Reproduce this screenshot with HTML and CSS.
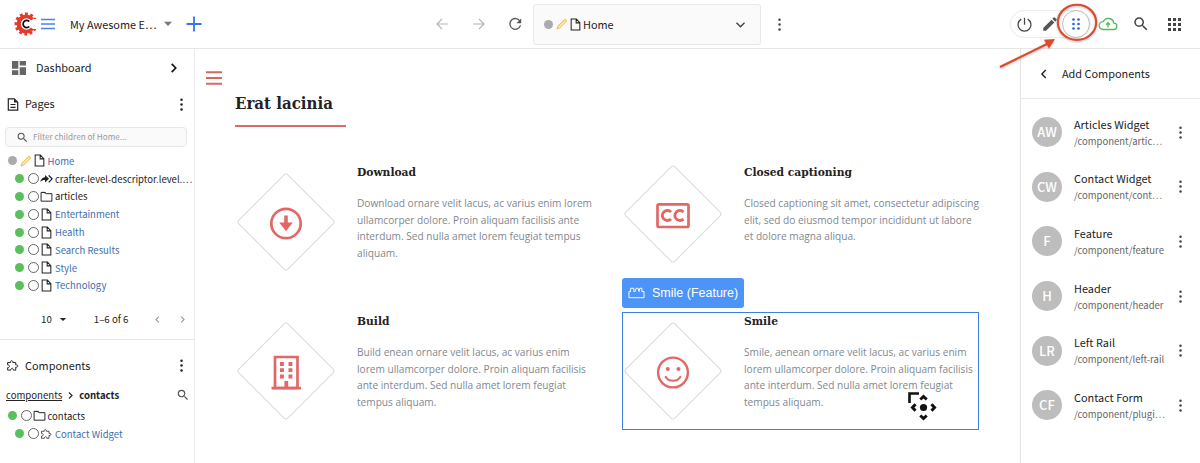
FILE: index.html
```html
<!DOCTYPE html>
<html lang="en">
<head>
<meta charset="utf-8">
<title>Home</title>
<link rel="stylesheet" href="styles.css">
</head>
<body>
<svg class="defs" width="0" height="0">
  <symbol id="dots" viewBox="0 0 24 24"><circle cx="12" cy="4.200" r="2"/><circle cx="12" cy="12" r="2"/><circle cx="12" cy="19.800" r="2"/></symbol>
  <symbol id="page" viewBox="0 0 12 12"><path d="M2 1h4.800L10 4.300V11H2zM6.600 1v3.500H10" fill="none" stroke="currentColor" stroke-width=".95"/></symbol>
  <symbol id="folder" viewBox="0 0 12 12"><path d="M1 2.200h3.600l1.100 1.200H11V10.300H1z" fill="none" stroke="currentColor" stroke-width=".9"/><path d="M1 1.900h3.800l1 1.400H5z"/></symbol>
  <symbol id="pencil" viewBox="0 0 12 12"><path d="M1 11l.7-2.700 7-7c.7-.6 2.500 1 1.800 1.900l-7 7z" fill="#f7d88a" stroke="#eebb45" stroke-width=".8"/><path d="M2.500 9.500l6-6" stroke="#fff" stroke-width=".6"/></symbol>
  <symbol id="search" viewBox="0 0 24 24"><path d="M15.500 14h-.79l-.28-.27A6.470 6.470 0 0 0 16 9.500 6.500 6.500 0 1 0 9.500 16c1.610 0 3.090-.59 4.230-1.570l.27.28v.79l5 4.990L20.490 19zm-6 0C7 14 5 12 5 9.500S7 5 9.500 5 14 7 14 9.500 12 14 9.500 14z"/></symbol>
  <symbol id="puzzle" viewBox="0 0 24 24"><path d="M3 6.500h5.500C7 2 13.500 2 12.500 6.500H18V11c5-1.500 5 5 0 4v5.500h-4.500c.5-4.500-5-4.500-4.500 0H3V16c4.500.5 4.500-5.500 0-5z" fill="none" stroke="currentColor" stroke-width="1.800"/></symbol>
  <symbol id="left" viewBox="0 0 12 12"><path d="M7.500 2.800L4.300 6l3.200 3.200" fill="none" stroke="currentColor" stroke-width="1.200"/></symbol>
  <symbol id="right" viewBox="0 0 12 12"><path d="M4.500 2.800L7.700 6 4.500 9.200" fill="none" stroke="currentColor" stroke-width="1.200"/></symbol>
</svg>

<header class="topbar">
  <div class="brand">
    <svg class="logo" viewBox="0 0 24 26"><circle cx="12" cy="13" r="10" fill="none" stroke="#e23b2e" stroke-width="3" stroke-dasharray="2.900 2.336" stroke-dashoffset="1.300"/><circle cx="12" cy="13" r="9.500" fill="#e23b2e"/><circle cx="12.500" cy="13" r="5.700" fill="#fff"/><path d="M15.500 10.500L19 8h6v10h-6l-3.500-2.500z" fill="#fff"/><path d="M15.300 10.500a3.600 3.600 0 1 0 0 5" fill="none" stroke="#111" stroke-width="1.700"/></svg>
    <svg class="menu" viewBox="0 0 14 12"><path d="M0 1.500h14M0 6h14M0 10.500h14" stroke="#4b7fe5" stroke-width="1.500"/></svg>
    <span class="site">My Awesome E…</span>
    <svg class="caret" viewBox="0 0 10 6"><path d="M1 .8h8L5 5z"/></svg>
    <svg class="plus" viewBox="0 0 16 16"><path d="M8 .5v15M.5 8h15" stroke="#3773ec" stroke-width="1.800"/></svg>
  </div>
  <nav class="history">
    <svg class="faint" viewBox="0 0 14 14"><path d="M13 7H2M7 2L2 7l5 5" fill="none" stroke="currentColor" stroke-width="1.200"/></svg>
    <svg class="faint" viewBox="0 0 14 14"><path d="M1 7h11M7 2l5 5-5 5" fill="none" stroke="currentColor" stroke-width="1.200"/></svg>
    <svg viewBox="0 0 14 14"><path d="M12 4.200A5.400 5.400 0 1 0 12.500 8.400" fill="none" stroke="currentColor" stroke-width="1.300"/><path d="M13.200 1.500v4.700H8.500z"/></svg>
  </nav>
  <div class="address">
    <i class="dot gray"></i><svg class="i12"><use href="#pencil"/></svg><svg class="i13"><use href="#page"/></svg><span>Home</span>
    <svg class="drop" viewBox="0 0 12 12"><path d="M2.300 4.300L6 8l3.700-3.700" fill="none" stroke="currentColor" stroke-width="1.300"/></svg>
  </div>
  <svg class="more i15"><use href="#dots"/></svg>
  <div class="modes">
    <svg class="i15" viewBox="0 0 14 14"><path d="M7 .8v6.500M4 2a6 6 0 1 0 6 0" fill="none" stroke="currentColor" stroke-width="1.150"/></svg>
    <svg class="edit" viewBox="0 0 24 24"><path d="M3 17.250V21h3.750L17.810 9.940l-3.750-3.750zM20.710 7.040a1 1 0 0 0 0-1.410l-2.340-2.340a1 1 0 0 0-1.410 0l-1.830 1.830 3.750 3.750z"/></svg>
    <span class="mode-on"><svg viewBox="0 0 10 14"><g fill="#2d62dc"><circle cx="2.500" cy="2.500" r="1.350"/><circle cx="7.500" cy="2.500" r="1.350"/><circle cx="2.500" cy="7" r="1.350"/><circle cx="7.500" cy="7" r="1.350"/><circle cx="2.500" cy="11.500" r="1.350"/><circle cx="7.500" cy="11.500" r="1.350"/></g></svg></span>
  </div>
  <div class="tools">
    <svg class="cloud" viewBox="0 0 20 14"><path d="M5 12.500h10.500a3.200 3.200 0 0 0 .3-6.400A5.600 5.600 0 0 0 5.200 4.700 3.900 3.900 0 0 0 5 12.500zM10 10.500V6M8 7.700l2-2 2 2" fill="none" stroke="#54b95a" stroke-width="1.300"/></svg>
    <svg class="find"><use href="#search"/></svg>
    <svg class="apps" viewBox="0 0 13 13"><path d="M0 0h3v3H0zM5 0h3v3H5zM10 0h3v3h-3zM0 5h3v3H0zM5 5h3v3H5zM10 5h3v3h-3zM0 10h3v3H0zM5 10h3v3H5zM10 10h3v3h-3z"/></svg>
  </div>
</header>

<div class="workspace">
  <aside class="sidebar">
    <div class="row dash"><svg class="tiles" viewBox="0 0 14 14"><path d="M0 0h6.300v7.700H0zM7.700 0H14v4.500H7.700zM0 9.300h6.300V14H0zM7.700 6.200H14V14H7.700z"/></svg><span>Dashboard</span><svg class="i14 go" viewBox="0 0 12 12"><path d="M4 2.500L7.500 6 4 9.500" fill="none" stroke="currentColor" stroke-width="1.400"/></svg></div>
    <div class="row pages"><svg class="doc" viewBox="0 0 12 13"><path d="M1.300.8h6l3.400 3.400v8H1.300zM3.500 6.500h5M3.500 9.300h5" fill="none" stroke="currentColor" stroke-width="1.200"/><path d="M7 .8l3.800 3.800H7z"/></svg><span>Pages</span><svg class="i15 end"><use href="#dots"/></svg></div>
    <div class="filter"><svg class="i13"><use href="#search"/></svg><span>Filter children of Home...</span></div>
    <ul class="tree">
      <li class="root"><i class="dot gray"></i><svg class="i12"><use href="#pencil"/></svg><svg class="i13"><use href="#page"/></svg><a>Home</a></li>
      <li><i class="dot"></i><i class="ring"></i><svg class="i13" viewBox="0 0 13 12"><path d="M0 9.500c1.500-3.500 3-4.500 5-4.700V2.500l4 3.800-4 3.700V7.500C3 7.500 2 8 0 9.500z"/><path d="M8.700 2.800l3.400 3.500-3.400 3.500" fill="none" stroke="#111" stroke-width="1.200"/></svg><span>crafter-level-descriptor.level.…</span></li>
      <li><i class="dot"></i><i class="ring"></i><svg class="i13"><use href="#folder"/></svg><span>articles</span></li>
      <li><i class="dot"></i><i class="ring"></i><svg class="i13"><use href="#page"/></svg><a>Entertainment</a></li>
      <li><i class="dot"></i><i class="ring"></i><svg class="i13"><use href="#page"/></svg><a>Health</a></li>
      <li><i class="dot"></i><i class="ring"></i><svg class="i13"><use href="#page"/></svg><a>Search Results</a></li>
      <li><i class="dot"></i><i class="ring"></i><svg class="i13"><use href="#page"/></svg><a>Style</a></li>
      <li><i class="dot"></i><i class="ring"></i><svg class="i13"><use href="#page"/></svg><a>Technology</a></li>
    </ul>
    <div class="pager"><span class="size">10</span><svg class="mini" viewBox="0 0 10 6"><path d="M1 1h8L5 5z"/></svg><span class="range">1–6 of 6</span><svg class="prev"><use href="#left"/></svg><svg class="next"><use href="#right"/></svg></div>
    <div class="row comps"><svg class="i13"><use href="#puzzle"/></svg><span>Components</span><svg class="i15 end"><use href="#dots"/></svg></div>
    <div class="crumbs"><u>components</u><svg viewBox="0 0 12 12"><path d="M4 2l4 4-4 4" fill="none" stroke="currentColor" stroke-width="1.500"/></svg><b>contacts</b><svg class="i14 end"><use href="#search"/></svg></div>
    <ul class="tree second">
      <li class="root"><i class="dot"></i><i class="ring"></i><svg class="i13"><use href="#folder"/></svg><span>contacts</span></li>
      <li><i class="dot"></i><i class="ring"></i><svg class="i12 puz"><use href="#puzzle"/></svg><a>Contact Widget</a></li>
    </ul>
  </aside>

  <main class="preview">
    <svg class="burger" viewBox="0 0 16 14"><path d="M0 1.300h16M0 7h16M0 12.700h16" stroke="#de6462" stroke-width="2.100"/></svg>
    <h1>Erat lacinia</h1>
    <section class="features">
      <article>
        <div class="icon"><svg viewBox="0 0 100 100"><rect x="15.300" y="15.300" width="69.400" height="69.400" rx="3" transform="rotate(45 50 50)" class="diamond"/><g transform="translate(50 51.500)"><circle r="14.700" fill="none" stroke="#e16866" stroke-width="2.700"/><path d="M-1.800-8h3.600v7h5L0 7.800-6.800-1h5z" fill="#e16866"/></g></svg></div>
        <div class="copy"><h2>Download</h2><p>Download ornare velit lacus, ac varius enim lorem<br>ullamcorper dolore. Proin aliquam facilisis ante<br>interdum. Sed nulla amet lorem feugiat tempus<br>aliquam.</p></div>
      </article>
      <article class="upper">
        <div class="icon"><svg viewBox="0 0 100 100"><rect x="15.300" y="15.300" width="69.400" height="69.400" rx="3" transform="rotate(45 50 50)" class="diamond"/><g transform="translate(50 51.500)" fill="none" stroke="#e16866"><rect x="-15.500" y="-11.200" width="31" height="22.700" rx="1.500" stroke-width="2.700"/><path d="M-2-3.400a5 5 0 1 0 0 6.800M10.500-3.400a5 5 0 1 0 0 6.800" stroke-width="2.900"/></g></svg></div>
        <div class="copy"><h2>Closed captioning</h2><p>Closed captioning sit amet, consectetur adipiscing<br>elit, sed do eiusmod tempor incididunt ut labore<br>et dolore magna aliqua.</p></div>
      </article>
      <article>
        <div class="icon"><svg viewBox="0 0 100 100"><rect x="15.300" y="15.300" width="69.400" height="69.400" rx="3" transform="rotate(45 50 50)" class="diamond"/><g transform="translate(50 51.500)" fill="#e16866"><path d="M-11-15.500h22.500v31H-11z" fill="none" stroke="#e16866" stroke-width="2.700"/><path d="M-14.500 14.300h29.500v2.700h-29.500zM-6-10.500h3.900v3.900H-6zM2.500-10.500h3.900v3.900H2.500zM-6-4.300h3.900v3.900H-6zM2.500-4.300h3.900v3.900H2.500zM-6 2h3.900v3.900H-6zM2.500 2h3.900v3.900H2.500zM-1.600 8.500h3.800v7h-3.800z"/></g></svg></div>
        <div class="copy"><h2>Build</h2><p>Build enean ornare velit lacus, ac varius enim<br>lorem ullamcorper dolore. Proin aliquam facilisis<br>ante interdum. Sed nulla amet lorem feugiat<br>tempus aliquam.</p></div>
      </article>
      <article class="selected">
        <div class="label"><svg viewBox="0 0 18 12"><path d="M1 11V4.500h1.800V1h3.400v3.500h1.300L8.700 1h2l1 3.500L12.500 1h2.200v3.500H17V11z" fill="none" stroke="#fff" stroke-width="1"/></svg><span>Smile (Feature)</span></div>
        <div class="icon"><svg viewBox="0 0 100 100"><rect x="15.300" y="15.300" width="69.400" height="69.400" rx="3" transform="rotate(45 50 50)" class="diamond"/><g transform="translate(50 51.500)"><circle r="14.900" fill="none" stroke="#e16866" stroke-width="2.400"/><circle cx="-5.200" cy="-3.500" r="2" fill="#e16866"/><circle cx="5.500" cy="-3.500" r="2" fill="#e16866"/><path d="M-7.300 4.500c3 5 11.600 5 14.600 0" fill="none" stroke="#e16866" stroke-width="2.200" stroke-linecap="round"/></g></svg></div>
        <div class="copy"><h2>Smile</h2><p>Smile, aenean ornare velit lacus, ac varius enim<br>lorem ullamcorper dolore. Proin aliquam facilisis<br>ante interdum. Sed nulla amet lorem feugiat<br>tempus aliquam.</p></div>
        <svg class="cursor" viewBox="0 0 30 30"><path d="M1.500 11V1.500H11" fill="none" stroke="#111" stroke-width="2.600"/><circle cx="15.500" cy="15.500" r="3.600"/><path d="M12.300 7.500l3.200-3 3.200 3M12.300 23.500l3.200 3 3.200-3M7.500 12.300l-3 3.200 3 3.200M23.500 12.300l3 3.200-3 3.200" fill="none" stroke="#111" stroke-width="3"/></svg>
      </article>
    </section>
  </main>

  <aside class="panel">
    <div class="panel-head"><svg class="i14" viewBox="0 0 12 12"><path d="M7.500 2.600L4.200 6l3.300 3.400" fill="none" stroke="currentColor" stroke-width="1.200"/></svg><span>Add Components</span></div>
    <ul class="cards">
      <li><b>AW</b><div><span>Articles Widget</span><small>/component/artic…</small></div><svg class="i15"><use href="#dots"/></svg></li>
      <li><b>CW</b><div><span>Contact Widget</span><small>/component/cont…</small></div><svg class="i15"><use href="#dots"/></svg></li>
      <li><b>F</b><div><span>Feature</span><small>/component/feature</small></div><svg class="i15"><use href="#dots"/></svg></li>
      <li><b>H</b><div><span>Header</span><small>/component/header</small></div><svg class="i15"><use href="#dots"/></svg></li>
      <li><b>LR</b><div><span>Left Rail</span><small>/component/left-rail</small></div><svg class="i15"><use href="#dots"/></svg></li>
      <li><b>CF</b><div><span>Contact Form</span><small>/component/plugi…</small></div><svg class="i15"><use href="#dots"/></svg></li>
    </ul>
  </aside>
</div>
<svg class="callout" viewBox="0 0 110 75"><ellipse cx="87" cy="22.300" rx="19.200" ry="17.600" fill="none" stroke="#dc4b2c" stroke-width="2.100"/><path d="M10 67L58 43.500" stroke="#dc4b2c" stroke-width="2.100"/><path d="M65 39l-11 .7 5 8.800z" fill="#dc4b2c"/></svg>
</body>
</html>
```

FILE: styles.css
```css
* { box-sizing: border-box; }
body { margin: 0; width: 1200px; height: 463px; overflow: hidden; background: #fff; color: #222; font: 10.900px/16px "Noto Sans CJK SC", sans-serif; }
svg { display: block; flex: none; fill: currentColor; }
ul { list-style: none; margin: 0; padding: 0; }
span, a, u { white-space: nowrap; }
.defs { position: absolute; }
.i12 { width: 12px; height: 12px; }
.i13 { width: 13px; height: 13px; }
.i14 { width: 14px; height: 14px; }
.i15 { width: 15px; height: 15px; }
.end { margin-left: auto; }

.topbar { display: flex; align-items: center; height: 49px; border-bottom: 1px solid #e6e6e6; color: #444; }
.brand { display: flex; align-items: center; width: 435px; padding-left: 14px; }
.logo { width: 24px; height: 26px; }
.menu { width: 14px; height: 12px; margin-left: 3px; }
.site { width: 92px; margin-left: 15px; color: #222; }
.caret { width: 10px; height: 6px; margin-left: 1px; color: #777; }
.plus { width: 16px; height: 16px; margin-left: 13px; }
.history { display: flex; gap: 22.500px; width: 98px; }
.history svg { width: 14px; height: 14px; color: #555; }
.history .faint { color: #b5b5b5; }
.address { display: flex; align-items: center; width: 228px; height: 41px; padding: 0 13px 0 10px; border: 1px solid #e9e9e9; border-radius: 3px; background: #fafafa; }
.address .i12 { margin-left: 3px; }
.address .i13 { margin-left: 1px; color: #222; }
.address span { margin: 0 0 1px 1px; color: #222; }
.drop { width: 13px; height: 13px; margin-left: auto; }
.more { margin-left: 10.500px; }
.modes { display: flex; align-items: center; width: 81px; height: 28px; margin-left: 223.500px; padding-left: 6px; border: 1px solid #ececec; border-radius: 14px; }
.edit { width: 18px; height: 18px; margin-left: 9px; color: #555; }
.mode-on { display: grid; place-items: center; flex: none; width: 28px; height: 28px; margin-left: 3px; border: 1px solid #bbb; border-radius: 50%; background: #fff; }
.mode-on svg { width: 10px; height: 14px; }
.tools { display: flex; align-items: center; margin-left: 7px; }
.cloud { width: 20px; height: 14px; }
.find { width: 18px; height: 18px; margin-left: 14px; }
.apps { width: 13px; height: 13px; margin-left: 18px; }

.workspace { display: grid; grid-template-columns: 195px 825px 180px; height: 414px; }
.sidebar { border-right: 1px solid #ececec; }
.row { display: flex; align-items: center; height: 36px; padding: 0 6px; }
.row span, .panel-head span { padding-bottom: 2px; }
.dash { height: 37px; padding-left: 12px; }
.dash span { margin-left: 10px; }
.tiles { width: 14px; height: 14px; color: #666; }
.row .go { margin: 0 7px 0 auto; color: #111; }
.pages { padding-left: 7px; }
.doc { width: 12px; height: 13px; }
.pages span { margin-left: 6px; }
.row .end { margin-right: -.5px; }
.filter { display: flex; align-items: center; width: 182px; height: 20px; margin: 5px 0 0 5px; padding-left: 10px; border: 1px solid #e8e8e8; border-radius: 4px; background: #fafafa; color: #555; }
.filter span { margin-left: 4px; color: #999; font-size: 8.150px; }
.tree { padding-top: 5px; }
.tree li { display: flex; align-items: center; height: 17.800px; padding-left: 15px; font-size: 9.500px; }
.tree .root { padding-left: 7.500px; }
.tree a { margin-left: 2px; color: #3d6fae; }
.tree span { margin-left: 2px; }
.dot { flex: none; width: 9px; height: 9px; border-radius: 50%; background: #5abf5c; }
.gray { background: #a9abb0; }
.ring { flex: none; width: 11px; height: 11px; margin: 0 1px 0 4px; border: 1px solid #666; border-radius: 50%; }
.root .i12 { margin: 0 1px 0 3px; }
.puz { margin-right: 1px; color: #444; }
.pager { display: flex; align-items: center; height: 46px; padding: 5px 6px 0 41px; border-bottom: 1px solid #e6e6e6; font-size: 9.700px; }
.mini { width: 8px; height: 5px; margin-left: 7px; }
.range { margin-left: 27px; }
.prev, .next { width: 11px; height: 11px; color: #999; }
.prev { margin-left: auto; }
.next { margin-left: 14px; }
.comps { height: 51px; }
.comps span { margin-left: 6px; }
.crumbs { display: flex; align-items: center; height: 8px; padding: 0 4px 0 6px; font-size: 9.600px; }
.crumbs .end { color: #555; }
.crumbs svg:not(.end) { width: 9px; height: 9px; margin: 0 4px; }
.second { padding-top: 7.500px; }

.preview { padding: 22px 0 0 11px; }
.burger { width: 16px; height: 14px; }
.preview h1 { width: 111px; height: 36px; margin: 6px 0 0 29px; border-bottom: 2px solid #e06a68; color: #1f2328; font: bold 16.700px/24px "DejaVu Serif Condensed", "DejaVu Serif", serif; white-space: nowrap; }
.features { display: grid; grid-template-columns: 357px 357px; grid-template-rows: 149px 119px; column-gap: 30px; margin: 36px 0 0 29px; }
.features article { position: relative; display: flex; height: 118px; }
.icon { width: 100px; padding: 9px 0 0 .5px; }
.upper .icon { padding-top: .5px; }
.icon svg { width: 100px; height: 100px; }
.diamond { fill: none; stroke: #dadada; stroke-width: 1; }
.copy { margin-left: 22px; }
.copy h2 { margin: 0; color: #222; font: bold 11.900px/19px "DejaVu Serif Condensed", "DejaVu Serif", serif; white-space: nowrap; }
.copy p { margin: 13px 0 0; color: #7f888f; font: 10.130px/16.600px "Open Sans", sans-serif; white-space: nowrap; }
.selected::after { content: ""; position: absolute; inset: 0; border: 1px solid #3d7fe0; }
.label { position: absolute; z-index: 1; left: 0; top: -34px; display: flex; align-items: center; gap: 7px; width: 122px; height: 30px; padding-left: 6px; border-radius: 3px; background: #4d94f8; color: #fff; font: 12.500px/16px "Liberation Sans", sans-serif; }
.label svg { width: 17px; height: 12px; }
.cursor { position: absolute; left: 286px; top: 80px; width: 30px; height: 30px; color: #111; }

.panel { border-left: 1px solid #e3e3e3; }
.panel-head { display: flex; align-items: center; height: 50px; padding-left: 16px; border-bottom: 1px solid #e6e6e6; }
.panel-head span { margin-left: 11px; }
.cards { padding-top: 6px; }
.cards li { display: flex; align-items: center; height: 54.600px; padding: 0 12px 0 11px; }
.cards b { display: grid; place-items: center; width: 30px; height: 30px; border-radius: 50%; background: #bdbdbd; color: #fff; font-size: 13px; font-weight: 500; }
.cards div { display: grid; width: 96px; margin-left: 12px; padding-top: 1px; }
.cards div span { line-height: 17px; }
.cards small { color: #666; font-size: 9.500px; line-height: 17px; white-space: nowrap; }
.cards li > svg { margin-left: auto; color: #444; }

.callout { position: absolute; left: 990px; top: 0; width: 110px; height: 75px; filter: drop-shadow(0 1px 1px #0004); }
```
